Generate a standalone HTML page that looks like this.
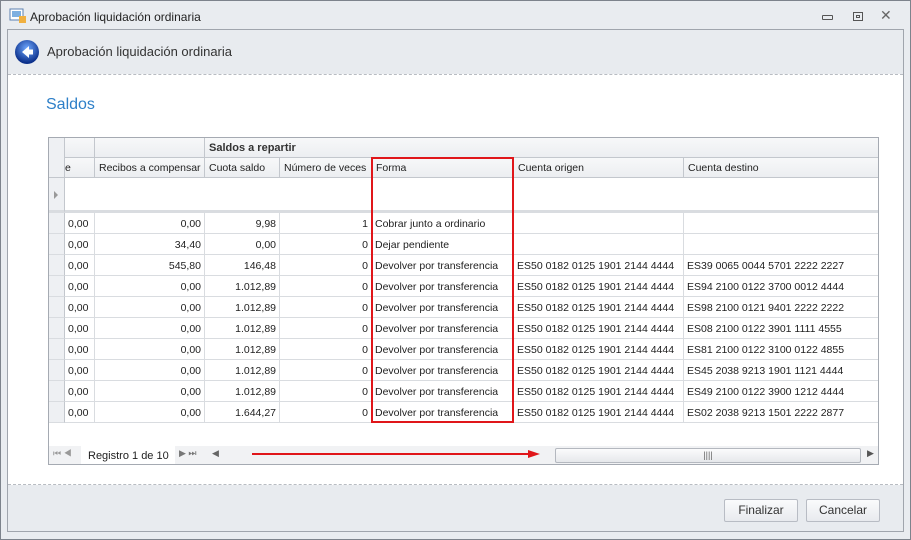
<!DOCTYPE html><html><head><style>
*{margin:0;padding:0;box-sizing:border-box}
body{width:911px;height:540px;overflow:hidden;background:#e9ecf0;font-family:"Liberation Sans",sans-serif;font-size:10.5px;color:#1e1e1e;position:relative}
.a{position:absolute}
.cell{position:absolute;height:21px;line-height:22px;border-right:1px solid #d9dce0;border-bottom:1px solid #d9dce0;padding:0 3px;white-space:nowrap;overflow:hidden}
.r{text-align:right}
.h{position:absolute;background:linear-gradient(#f7f8f9,#eceef1);border-right:1px solid #c3c7cd;border-bottom:1px solid #c3c7cd;padding:0 4px;line-height:20px;white-space:nowrap;overflow:hidden}
.btn{position:absolute;top:499px;width:74px;height:23px;border:1px solid #b8bcc4;border-radius:2px;background:linear-gradient(#fafbfc,#e8eaee);text-align:center;line-height:21px;font-size:12px;color:#333}
</style></head><body>
<div class="a" style="left:0;top:0;width:911px;height:540px;border:1px solid #7d838c"></div>
<svg class="a" style="left:9px;top:8px" width="18" height="16"><rect x="1" y="1" width="13" height="11" fill="#fff" stroke="#5a7fb0"/><rect x="3" y="3" width="9" height="6" fill="#7fb0e0"/><rect x="10" y="8" width="7" height="7" fill="#f0b040"/></svg>
<div class="a" style="left:30px;top:10px;font-size:12px;color:#222">Aprobación liquidación ordinaria</div>
<div class="a" style="left:822px;top:15px;width:11px;height:5px;border:1px solid #555;border-radius:1px"></div>
<div class="a" style="left:853px;top:12px;width:10px;height:9px;border:1px solid #555"><div style="margin:2px auto;width:4px;height:3px;border:1px solid #555"></div></div>
<div class="a" style="left:880px;top:7px;font-size:14px;color:#666">✕</div>
<div class="a" style="left:7px;top:29px;width:897px;height:503px;border:1px solid #a0a5ad;background:#e8ebef"></div>
<svg class="a" style="left:14px;top:39px" width="26" height="26"><defs><radialGradient id="g" cx="50%" cy="35%" r="60%"><stop offset="0" stop-color="#6fa8ff"/><stop offset="1" stop-color="#0b2f8a"/></radialGradient></defs><circle cx="13" cy="13" r="12" fill="url(#g)"/><path d="M15 7 L8 13 L15 19 L15 15.5 L19 15.5 L19 10.5 L15 10.5Z" fill="#fff"/></svg>
<div class="a" style="left:47px;top:44px;font-size:13px;color:#333">Aprobación liquidación ordinaria</div>
<div class="a" style="left:8px;top:74px;width:895px;height:411px;background:#fff;border-top:1px dashed #b8bcc2;border-bottom:1px dashed #b8bcc2"></div>
<div class="a" style="left:46px;top:96px;font-size:16px;color:#2d7fc8">Saldos</div>
<div class="a" style="left:48px;top:137px;width:831px;height:328px;border:1px solid #a5aab2;background:#fff;overflow:hidden">
<div class="h" style="left:0;top:0;width:16px;height:40px;background:#eef0f3"></div>
<div class="h" style="left:16px;top:0;width:30px;height:20px"></div>
<div class="h" style="left:46px;top:0;width:110px;height:20px"></div>
<div class="h" style="left:156px;top:0;width:674px;height:20px;font-weight:bold;color:#333;font-size:11px">Saldos a repartir</div>
<div class="h" style="left:16px;top:20px;width:30px;height:20px;padding:0 0 0 0">e</div>
<div class="h" style="left:46px;top:20px;width:110px;height:20px">Recibos a compensar</div>
<div class="h" style="left:156px;top:20px;width:75px;height:20px">Cuota saldo</div>
<div class="h" style="left:231px;top:20px;width:92px;height:20px">Número de veces</div>
<div class="h" style="left:323px;top:20px;width:142px;height:20px">Forma</div>
<div class="h" style="left:465px;top:20px;width:170px;height:20px">Cuenta origen</div>
<div class="h" style="left:635px;top:20px;width:195px;height:20px">Cuenta destino</div>
<div class="a" style="left:0;top:40px;width:16px;height:35px;background:#eef0f3;border-right:1px solid #c3c7cd;border-bottom:3px solid #d9dce0"></div>
<div class="a" style="left:5px;top:53px;width:0;height:0;border-left:4px solid #999;border-top:4px solid transparent;border-bottom:4px solid transparent"></div>
<div class="a" style="left:16px;top:72px;width:815px;height:3px;background:#d9dce0"></div>
<div id="rows"></div>
<div class="a" style="left:0;top:308px;width:831px;height:20px;background:#f1f2f4"></div>
<div class="a" style="left:4px;top:310px;font-size:9px;color:#999">⏮ ◀</div>
<div class="a" style="left:32px;top:308px;width:94px;height:19px;background:#fff;line-height:20px;padding-left:7px;font-size:11px">Registro 1 de 10</div>
<div class="a" style="left:130px;top:310px;font-size:9px;color:#777">▶ ⏭</div>
<div class="a" style="left:163px;top:310px;font-size:9px;color:#666">◀</div>
<div class="a" style="left:506px;top:310px;width:306px;height:15px;border:1px solid #b4b8bf;border-radius:2px;background:linear-gradient(#fbfbfc,#e6e8eb);text-align:center;font-size:9px;line-height:13px;color:#666">||||</div>
<div class="a" style="left:818px;top:310px;font-size:9px;color:#555">▶</div>
</div>
<div class="a" style="left:371px;top:157px;width:143px;height:266px;border:2px solid #e0161a"></div>
<div class="a" style="left:252px;top:453px;width:280px;height:2px;background:#e0161a"></div>
<div class="a" style="left:528px;top:450px;width:0;height:0;border-left:12px solid #e0161a;border-top:4px solid transparent;border-bottom:4px solid transparent"></div>
<div class="btn" style="left:724px">Finalizar</div>
<div class="btn" style="left:806px">Cancelar</div>
<script>
var d=[["0,00","0,00","9,98","1","Cobrar junto a ordinario","",""],["0,00","34,40","0,00","0","Dejar pendiente","",""],["0,00","545,80","146,48","0","Devolver por transferencia","ES50 0182 0125 1901 2144 4444","ES39 0065 0044 5701 2222 2227"],["0,00","0,00","1.012,89","0","Devolver por transferencia","ES50 0182 0125 1901 2144 4444","ES94 2100 0122 3700 0012 4444"],["0,00","0,00","1.012,89","0","Devolver por transferencia","ES50 0182 0125 1901 2144 4444","ES98 2100 0121 9401 2222 2222"],["0,00","0,00","1.012,89","0","Devolver por transferencia","ES50 0182 0125 1901 2144 4444","ES08 2100 0122 3901 1111 4555"],["0,00","0,00","1.012,89","0","Devolver por transferencia","ES50 0182 0125 1901 2144 4444","ES81 2100 0122 3100 0122 4855"],["0,00","0,00","1.012,89","0","Devolver por transferencia","ES50 0182 0125 1901 2144 4444","ES45 2038 9213 1901 1121 4444"],["0,00","0,00","1.012,89","0","Devolver por transferencia","ES50 0182 0125 1901 2144 4444","ES49 2100 0122 3900 1212 4444"],["0,00","0,00","1.644,27","0","Devolver por transferencia","ES50 0182 0125 1901 2144 4444","ES02 2038 9213 1501 2222 2877"]];
var c=[[16,30,0],[46,110,1],[156,75,1],[231,92,1],[323,142,0],[465,170,0],[635,195,0]],h="";
d.forEach(function(r,i){var t=75+i*21;h+='<div class="a" style="left:0;top:'+t+'px;width:16px;height:21px;background:#eef0f3;border-right:1px solid #c3c7cd;border-bottom:1px solid #d9dce0"></div>';c.forEach(function(k,j){h+='<div class="cell'+(k[2]?' r':'')+'" style="left:'+k[0]+'px;top:'+t+'px;width:'+k[1]+'px">'+r[j]+'</div>'})});
document.getElementById('rows').innerHTML=h;
</script>
</body></html>
